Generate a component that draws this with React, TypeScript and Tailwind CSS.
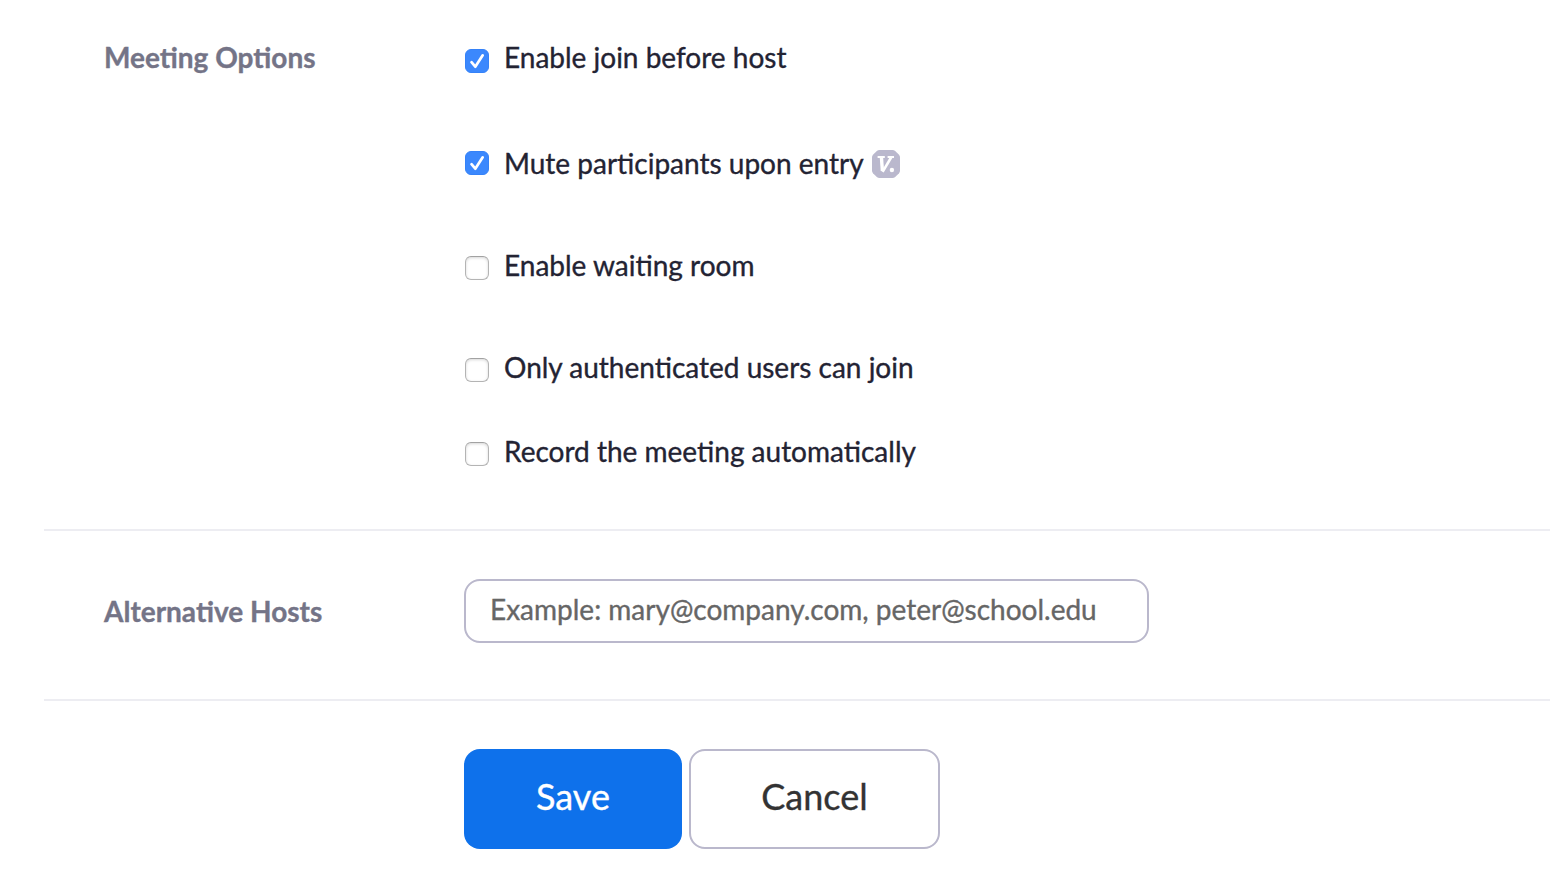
import { useState } from "react";

type Option = { label: string; checked: boolean; row: string; box: string; badge?: boolean };

const OPTIONS: Option[] = [
  { label: "Enable join before host", checked: true, row: "mb-[66px]", box: "mt-3" },
  { label: "Mute participants upon entry", checked: true, row: "mb-[62px]", box: "mt-2", badge: true },
  { label: "Enable waiting room", checked: false, row: "mb-[62px]", box: "mt-[11px]" },
  { label: "Only authenticated users can join", checked: false, row: "mb-11", box: "mt-[11px]" },
  { label: "Record the meeting automatically", checked: false, row: "", box: "mt-[11px]" },
];

function VersionBadge() {
  return (
    <svg viewBox="0 0 28 28" className="mt-[7px] ml-2 h-7 w-7 shrink-0" aria-hidden="true">
      <path
        d="M7.500 0H20.500Q22 0 23.200 1L27 4.800Q28 6 28 7.500V20.500Q28 22 27 23.200L23.200 27Q22 28 20.500 28H7.500Q6 28 4.800 27L1 23.200Q0 22 0 20.500V7.500Q0 6 1 4.800L4.800 1Q6 0 7.500 0Z"
        fill="#bab8cd"
      />
      <g fill="none" stroke="#fff">
        <path d="M5.600 7H12.800M15.600 7H22" strokeWidth="2.200" />
        <path d="M9.400 7L10.400 21" strokeWidth="3.400" />
        <path d="M10.600 21.800L19.400 7" strokeWidth="2.600" />
      </g>
      <circle cx="19.900" cy="20" r="2.200" fill="#fff" />
    </svg>
  );
}

function Checkbox({ checked, onChange, className, label }: { checked: boolean; onChange: () => void; className: string; label: string }) {
  return (
    <span className={`grid h-6 w-6 shrink-0 ${className}`}>
      <input
        type="checkbox"
        aria-label={label}
        checked={checked}
        onChange={onChange}
        className="col-start-1 row-start-1 h-6 w-6 appearance-none rounded-[6px] border border-[#b4b4b4] border-t-[#a2a2a2] bg-white shadow-[inset_0_1px_3px_rgba(0,0,0,0.16)] checked:border-[#3582f8] checked:bg-[#3b88fd] checked:shadow-none"
      />
      {checked && (
        <svg viewBox="0 0 24 24" className="pointer-events-none col-start-1 row-start-1 h-6 w-6">
          <path d="M6.500 13.200L10.300 17.700L17.700 6.300" fill="none" stroke="#fff" strokeWidth="2.700" strokeLinecap="round" strokeLinejoin="round" />
        </svg>
      )}
    </span>
  );
}

export default function App() {
  const [values, setValues] = useState(OPTIONS.map((o) => o.checked));
  const toggle = (i: number) => setValues(values.map((v, j) => (j === i ? !v : v)));

  return (
    <main className="h-[888px] w-full overflow-hidden bg-white pl-11 font-['Lato',sans-serif] text-[28px] leading-10 text-[#232333] [-webkit-text-stroke:0.35px]">
      <section className="flex border-b-2 border-[#ededf2] pt-[37px] pb-[58px] pl-[60px]">
        <h2 className="w-[361px] shrink-0 font-bold text-[#747487]">Meeting Options</h2>
        <div>
          {OPTIONS.map((o, i) => (
            <div key={o.label} className={`flex h-10 items-start ${o.row}`}>
              <Checkbox label={o.label} checked={values[i]} onChange={() => toggle(i)} className={o.box} />
              <span className="ml-[15px] whitespace-nowrap">{o.label}</span>
              {o.badge && <VersionBadge />}
            </div>
          ))}
        </div>
      </section>
      <section className="flex border-b-2 border-[#ededf2] pt-12 pb-14 pl-[60px]">
        <h2 className="mt-3 w-[360px] shrink-0 font-bold text-[#747487]">Alternative Hosts</h2>
        <input
          type="text"
          placeholder="Example: mary@company.com, peter@school.edu"
          className="h-16 w-[685px] rounded-2xl border-2 border-[#bab8cc] px-6 pb-1 text-[#666] placeholder:text-[#666]"
        />
      </section>
      <div className="flex gap-[7px] pt-12 pl-[420px] text-4xl">
        <button className="h-[100px] w-[218px] rounded-2xl bg-[#0e71eb] pb-1.5 text-white">Save</button>
        <button className="h-[100px] w-[251px] rounded-2xl border-2 border-[#bab8cc] bg-white pb-1.5 text-[#333]">Cancel</button>
      </div>
    </main>
  );
}
